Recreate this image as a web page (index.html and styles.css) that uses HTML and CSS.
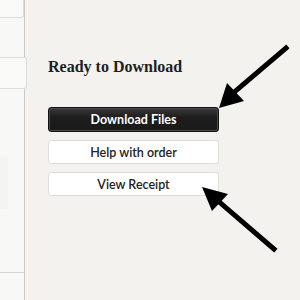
FILE: index.html
```html
<!DOCTYPE html>
<html>
<head>
<meta charset="utf-8">
<link rel="stylesheet" href="styles.css">
</head>
<body>
<div class="page">
  <aside class="sidebar">
    <div class="side-card side-card-top"></div>
    <div class="side-card side-card-mid"></div>
    <div class="side-soft"></div>
    <div class="side-rule"></div>
  </aside>
  <main class="main">
    <h1 class="title">Ready to Download</h1>
    <div class="actions">
      <button class="btn btn-dark">Download Files</button>
      <button class="btn btn-light">Help with order</button>
      <button class="btn btn-light">View Receipt</button>
    </div>
  </main>
  <svg class="arrows" width="300" height="300" viewBox="0 0 300 300">
    <line x1="286" y1="48" x2="232" y2="94" stroke="#000" stroke-width="5" stroke-linecap="square"/>
    <polygon points="219,108 227,83 244,101" fill="#000"/>
    <line x1="274" y1="249" x2="217" y2="200" stroke="#000" stroke-width="5" stroke-linecap="square"/>
    <polygon points="202,187 212,211 228,194" fill="#000"/>
  </svg>
</div>
</body>
</html>
```
FILE: styles.css
```css
html, body {
  margin: 0;
  padding: 0;
  background: #f3f2ef;
}
.page {
  position: relative;
  display: flex;
  width: 300px;
  height: 300px;
  overflow: hidden;
}
.sidebar {
  width: 24px;
  flex: none;
  border-right: 1px solid #c9c9c7;
  background: #f8f8f6;
  display: flex;
  flex-direction: column;
}
.side-card {
  background: #f9f9f8;
  border: 1px solid #dcdcda;
  border-left: none;
}
.side-card-top {
  height: 17px;
  border-top: none;
  border-bottom-right-radius: 3px;
}
.side-card-mid {
  margin-top: 39px;
  height: 30px;
  margin-right: -3px;
  border-radius: 0 3px 3px 0;
  background: #f9f9f8;
}
.side-soft {
  margin-top: 67px;
  width: 8px;
  height: 53px;
  background: #f4f4f2;
}
.side-rule {
  margin-top: 63px;
  height: 1px;
  background: #d6d6d4;
}
.main {
  padding: 56px 0 0 23px;
}
.title {
  margin: 0;
  font-family: "Liberation Serif", serif;
  font-weight: bold;
  font-size: 16px;
  line-height: 22px;
  color: #1e1e1e;
}
.actions {
  margin-top: 29px;
  width: 171px;
  display: flex;
  flex-direction: column;
  gap: 8px;
}
.btn {
  height: 24px;
  margin: 0;
  padding: 0;
  font-family: "Lato", "Open Sans", sans-serif;
  font-size: 12.5px;
  font-weight: bold;
  border-radius: 3px;
  text-align: center;
}
.btn-dark {
  height: 25px;
  color: #fff;
  background: linear-gradient(#3a3a3a, #1d1d1d 40%, #1a1a1a);
  border: 1px solid #111;
  box-shadow: inset 0 0 0 1px #4a4a4a;
}
.btn-light {
  color: #222;
  background: #fff;
  border: 1px solid #dcdcda;
  font-weight: 600;
}
.arrows {
  position: absolute;
  left: 0;
  top: 0;
}
```
